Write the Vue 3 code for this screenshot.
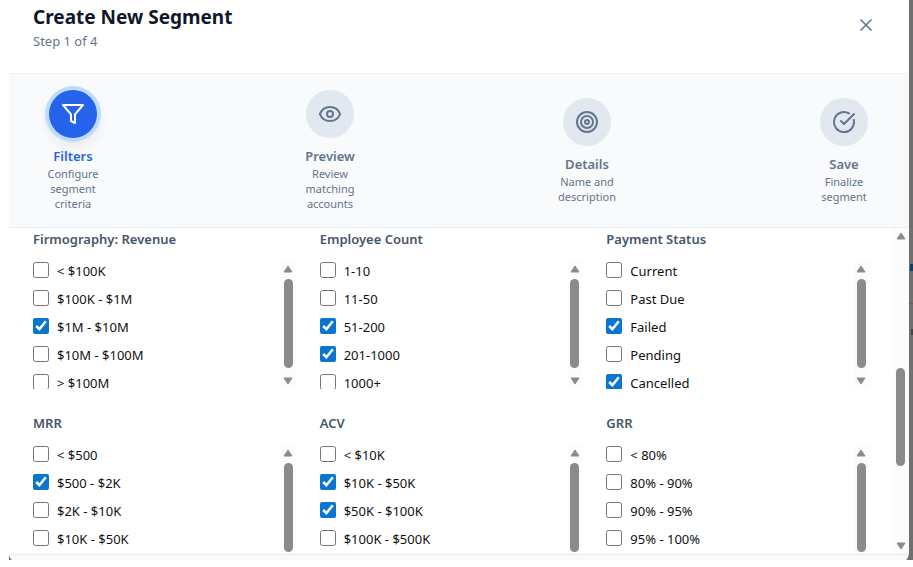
<template>
  <div class="backdrop">
    <div class="modal" role="dialog" aria-labelledby="modal-title">
      <!-- Header -->
      <header class="modal-header">
        <div>
          <h2 id="modal-title" class="modal-title">Create New Segment</h2>
          <p class="modal-subtitle">Step {{ currentStep }} of {{ steps.length }}</p>
        </div>
        <button type="button" class="close-button" aria-label="Close">
          <svg class="icon" viewBox="0 0 24 24">
            <path d="M18 6 6 18M6 6l12 12" />
          </svg>
        </button>
      </header>

      <!-- Stepper -->
      <ol class="steps">
        <li
          v-for="(step, index) in steps"
          :key="step.name"
          class="step"
          :class="{ active: index + 1 === currentStep }"
        >
          <span class="step-circle">
            <svg class="icon step-icon" viewBox="0 0 24 24">
              <path v-for="d in step.paths" :key="d" :d="d" />
              <circle v-for="r in step.circles" :key="r" cx="12" cy="12" :r="r" />
            </svg>
          </span>
          <span class="step-name">{{ step.name }}</span>
          <span class="step-description">{{ step.description }}</span>
        </li>
      </ol>

      <!-- Filters -->
      <div class="modal-body">
        <div class="filters">
          <fieldset v-for="group in groups" :key="group.title" class="filter-group">
            <legend class="filter-title">{{ group.title }}</legend>
            <div class="filter-box">
              <div class="filter-list">
                <label v-for="option in group.options" :key="option" class="filter-option">
                  <input v-model="selected[group.title]" type="checkbox" :value="option" />
                  <span>{{ option }}</span>
                </label>
              </div>
              <div class="scrollbar" aria-hidden="true">
                <svg class="arrow" viewBox="0 0 10 8"><path d="M5 1 9 7H1z" /></svg>
                <span class="track"><span class="thumb"></span></span>
                <svg class="arrow" viewBox="0 0 10 8"><path d="M5 7 1 1h8z" /></svg>
              </div>
            </div>
          </fieldset>
        </div>
        <div class="scrollbar" aria-hidden="true">
          <svg class="arrow" viewBox="0 0 10 8"><path d="M5 1 9 7H1z" /></svg>
          <span class="track">
            <span class="thumb" :style="{ top: scroll.top + '%', height: scroll.size + '%' }"></span>
          </span>
          <svg class="arrow" viewBox="0 0 10 8"><path d="M5 7 1 1h8z" /></svg>
        </div>
      </div>

      <footer class="modal-footer"></footer>
    </div>
  </div>
</template>

<script setup>
import { ref, reactive } from "vue";

const currentStep = ref(1);

// Position of the main scroll thumb, in percent of its track
const scroll = reactive({ top: 42, size: 34 });

const steps = [
  {
    name: "Filters",
    description: "Configure segment criteria",
    paths: ["M22 3H2l8 9.46V19l4 2v-8.54L22 3z"],
  },
  {
    name: "Preview",
    description: "Review matching accounts",
    paths: [
      "M2.06 12.35a1 1 0 0 1 0-.7 10.75 10.75 0 0 1 19.88 0 1 1 0 0 1 0 .7 10.75 10.75 0 0 1-19.88 0",
    ],
    circles: [3],
  },
  {
    name: "Details",
    description: "Name and description",
    circles: [10, 6, 2],
  },
  {
    name: "Save",
    description: "Finalize segment",
    paths: ["M21.8 10A10 10 0 1 1 17 3.34", "m9 11 3 3L22 4"],
  },
];

const groups = [
  {
    title: "Firmography: Revenue",
    options: ["< $100K", "$100K - $1M", "$1M - $10M", "$10M - $100M", "> $100M"],
  },
  {
    title: "Employee Count",
    options: ["1-10", "11-50", "51-200", "201-1000", "1000+"],
  },
  {
    title: "Payment Status",
    options: ["Current", "Past Due", "Failed", "Pending", "Cancelled"],
  },
  {
    title: "MRR",
    options: ["< $500", "$500 - $2K", "$2K - $10K", "$10K - $50K"],
  },
  {
    title: "ACV",
    options: ["< $10K", "$10K - $50K", "$50K - $100K", "$100K - $500K"],
  },
  {
    title: "GRR",
    options: ["< 80%", "80% - 90%", "90% - 95%", "95% - 100%"],
  },
];

// Ticked options per group
const selected = reactive({
  "Firmography: Revenue": ["$1M - $10M"],
  "Employee Count": ["51-200", "201-1000"],
  "Payment Status": ["Failed", "Cancelled"],
  MRR: ["$500 - $2K"],
  ACV: ["$10K - $50K", "$50K - $100K"],
  GRR: [],
});
</script>

<style>
body {
  margin: 0;
  background: #fff;
}
</style>

<style scoped>
/* The dimmed page shows as a thin strip on the right */
.backdrop {
  margin-left: 9px;
  padding-right: 4px;
  background:
    linear-gradient(#0b3f70, #0b3f70) right 0 top 264px / 3px 7px no-repeat,
    linear-gradient(#a04444, #a04444) right 0 top 303px / 4px 1px no-repeat,
    linear-gradient(#444, #444) right 0 top 329px / 2px 6px no-repeat,
    #707070;
  font-family: "Noto Sans", "Open Sans", sans-serif;
  font-size: 14px;
  line-height: 20px;
}

.modal {
  display: flex;
  flex-direction: column;
  height: calc(100vh - 7px);
  box-sizing: border-box;
  background: #fff;
  border-right: 1px solid #f8fafc;
  border-radius: 0 0 4px 4px / 0 0 8px 8px;
  overflow: hidden;
}

.modal-header {
  display: flex;
  justify-content: space-between;
  align-items: center;
  padding: 0 24px 24px;
  border-bottom: 1px solid #eef2f7;
}

.modal-title {
  margin: 0;
  font-size: 19px;
  line-height: 34px;
  font-weight: 700;
  color: #0f172a;
}

.modal-subtitle {
  margin: 0;
  font-size: 13px;
  line-height: 15px;
  color: #64748b;
}

.close-button {
  display: flex;
  padding: 8px;
  border: none;
  background: none;
  color: #64748b;
  cursor: pointer;
}

.icon {
  width: 20px;
  height: 20px;
  fill: none;
  stroke: currentColor;
  stroke-width: 2;
  stroke-linecap: round;
  stroke-linejoin: round;
}

/* Stepper */
.steps {
  display: flex;
  justify-content: space-between;
  align-items: center;
  margin: 0;
  padding: 16px 24px;
  list-style: none;
  background: #f8fafc;
  border-bottom: 1px solid #e8edf4;
}

.step {
  display: flex;
  flex-direction: column;
  align-items: center;
  width: 80px;
  text-align: center;
  color: #64748b;
}

.step-circle {
  display: flex;
  align-items: center;
  justify-content: center;
  width: 48px;
  height: 48px;
  margin-bottom: 8px;
  border-radius: 50%;
  background: #e2e8f0;
}

.step-icon {
  width: 24px;
  height: 24px;
}

.step-name {
  font-size: 13px;
  font-weight: 600;
}

.step-description {
  font-size: 11px;
  line-height: 15px;
}

.step.active .step-circle {
  background: #2563eb;
  color: #fff;
  box-shadow: 0 0 0 4px #bfdbfe, 0 6px 12px 2px rgba(0, 0, 0, 0.08);
}

.step.active .step-name {
  color: #2563eb;
}

/* Filters */
.modal-body {
  display: flex;
  flex: 1;
  min-height: 0;
  overflow: hidden;
}

.filters {
  display: grid;
  grid-template-columns: repeat(3, 1fr);
  align-content: start;
  gap: 24px;
  flex: 1;
  padding: 1px 24px 0;
}

.filter-group {
  min-width: 0;
  margin: 0;
  padding: 0;
  border: none;
}

.filter-title {
  margin-bottom: 12px;
  padding: 0;
  font-size: 13px;
  font-weight: 600;
  color: #475569;
}

.filter-box {
  display: flex;
  height: 128px;
}

.filter-list {
  display: flex;
  flex-direction: column;
  gap: 8px;
  flex: 1;
  overflow: hidden;
}

.filter-option {
  display: flex;
  align-items: center;
  gap: 8px;
  flex: none;
  font-size: 13px;
  color: #111;
  cursor: pointer;
}

.filter-option input {
  width: 16px;
  height: 16px;
  margin: 0 0 2px;
  accent-color: #0b76d1;
}

/* Scrollbars */
.scrollbar {
  display: flex;
  flex-direction: column;
  align-items: center;
  gap: 6px;
  width: 15px;
  padding: 4px 0;
  box-sizing: border-box;
  background: #fcfcfc;
}

.arrow {
  flex: none;
  width: 12px;
  height: 8px;
  fill: #8b8b8b;
  stroke: #8b8b8b;
  stroke-linejoin: round;
}

.track {
  position: relative;
  flex: 1;
  width: 9px;
}

.thumb {
  position: absolute;
  top: 0;
  width: 9px;
  height: 97%;
  border-radius: 5px;
  background: #8b8b8b;
}

.modal-footer {
  height: 5px;
  background: #f8fafc;
  border-top: 1px solid #e8edf4;
}
</style>
